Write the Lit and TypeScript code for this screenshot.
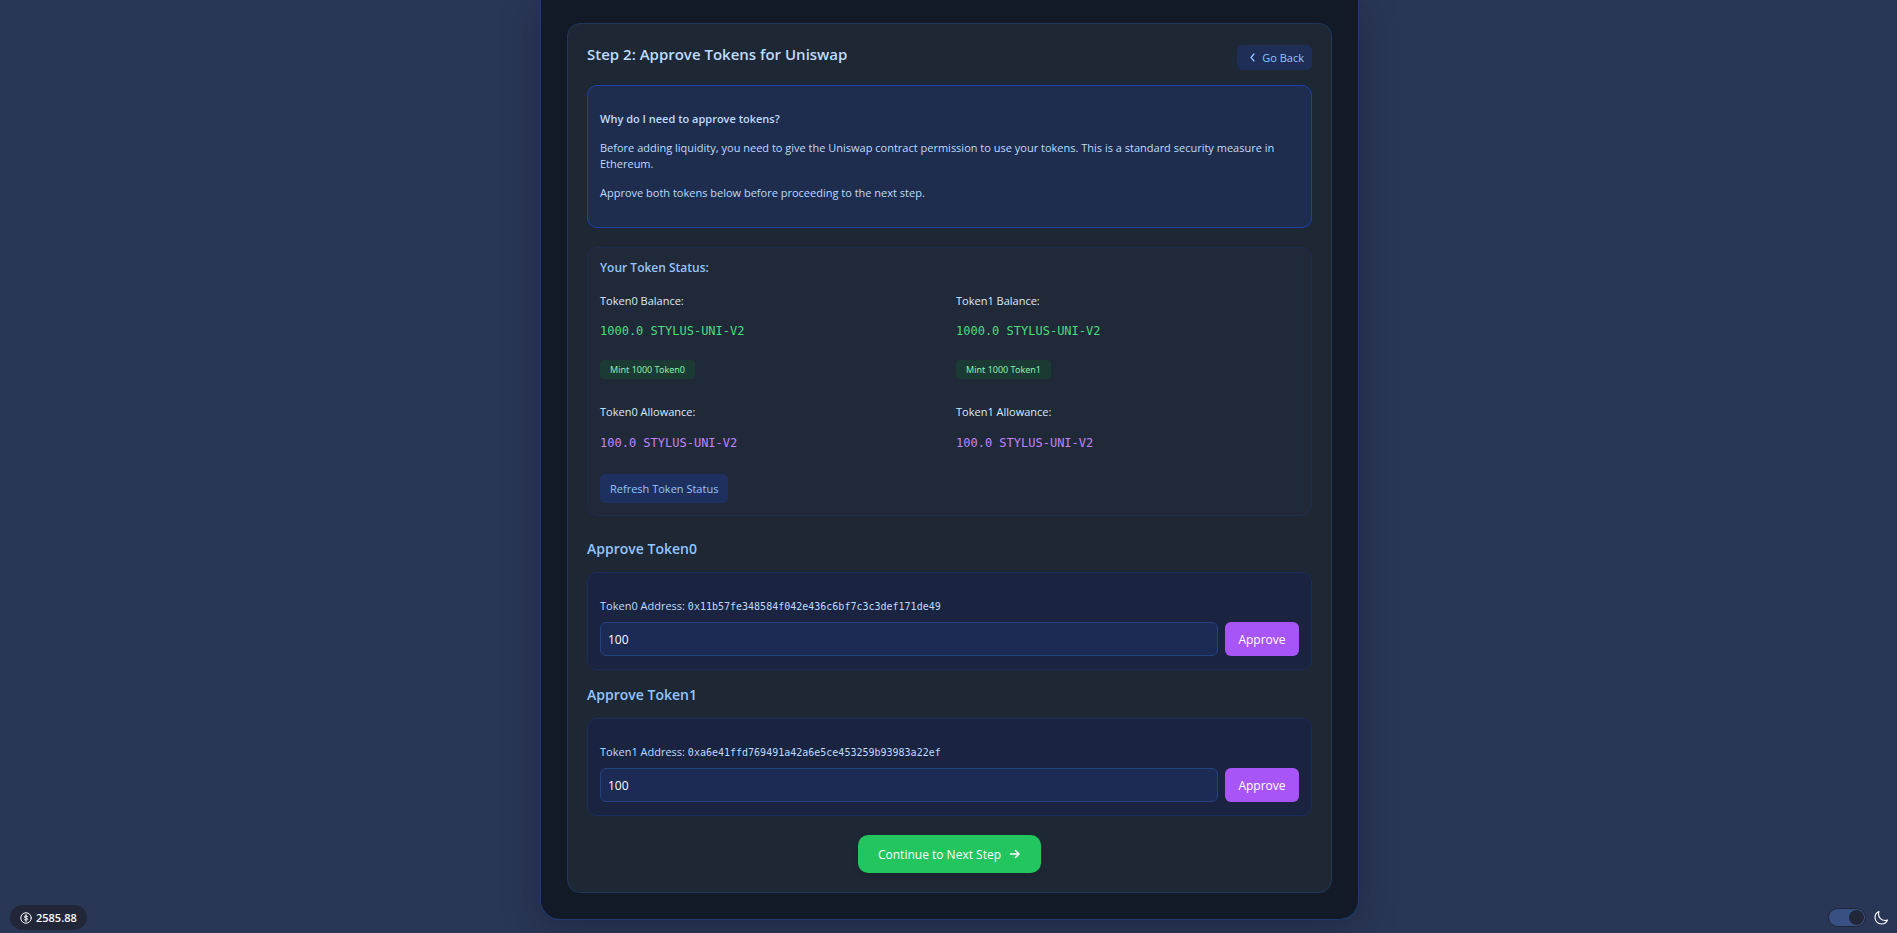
import { LitElement, html, css } from "lit";
import { customElement, property } from "lit/decorators.js";

const controls = css`
  button {
    font: inherit;
    border: 0;
    margin: 0;
    cursor: pointer;
    display: inline-flex;
    align-items: center;
    justify-content: center;
    white-space: nowrap;
  }
  p,
  h2,
  h3,
  h4 {
    margin: 0;
  }
  .mono {
    font-family: "DejaVu Sans Mono", monospace;
  }
`;

@customElement("token-status")
class TokenStatus extends LitElement {
  @property() token = "";
  @property() balance = "";
  @property() allowance = "";

  static styles = [
    controls,
    css`
      :host {
        display: block;
      }
      .label {
        font-size: 11px;
        line-height: 16px;
        color: #dbeafe;
      }
      .amount {
        margin-top: 12px;
        font-size: 12px;
        line-height: 20px;
      }
      .balance {
        color: #4ade80;
      }
      .allowance {
        color: #c084fc;
        margin-top: 13px;
      }
      .mint {
        height: 19px;
        margin: 19px 0 25px;
        padding: 0 10px;
        border-radius: 4px;
        background: #1c3a34;
        color: #86efac;
        font-family: "Noto Sans", sans-serif;
        font-size: 9px;
      }
    `,
  ];

  render() {
    return html`
      <p class="label">${this.token} Balance:</p>
      <p class="amount balance mono">${this.balance}</p>
      <button class="mint" type="button">Mint 1000 ${this.token}</button>
      <p class="label">${this.token} Allowance:</p>
      <p class="amount allowance mono">${this.allowance}</p>
    `;
  }
}

@customElement("approve-form")
class ApproveForm extends LitElement {
  @property() token = "";
  @property() address = "";

  static styles = [
    controls,
    css`
      :host {
        display: block;
      }
      .heading {
        font-size: 14px;
        line-height: 20px;
        font-weight: 600;
        color: #93c5fd;
        margin-bottom: 13px;
      }
      .box {
        padding: 25px 12px 13px;
        border: 1px solid #1c2c5c;
        border-radius: 10px;
        background: #1a2440;
      }
      .address {
        display: block;
        font-size: 11px;
        line-height: 16px;
        color: #bfdbfe;
        margin-bottom: 7px;
      }
      .address .mono {
        font-size: 10px;
      }
      .row {
        display: flex;
        gap: 7px;
      }
      .amount {
        flex: 1;
        min-width: 0;
        height: 34px;
        box-sizing: border-box;
        padding: 0 7px;
        border: 1px solid #234181;
        border-radius: 6px;
        background: #1b2b56;
        color: #fff;
        font: inherit;
        font-size: 12px;
        outline: 0;
      }
      .approve {
        min-width: 74px;
        height: 34px;
        padding: 0 12px;
        border-radius: 6px;
        background: #a855f7;
        color: #fff;
        font-size: 12px;
      }
    `,
  ];

  render() {
    return html`
      <h3 class="heading">Approve ${this.token}</h3>
      <div class="box">
        <label class="address" for="amount"
          >${this.token} Address: <span class="mono">${this.address}</span></label
        >
        <div class="row">
          <input id="amount" class="amount" type="text" value="100" />
          <button class="approve" type="button">Approve</button>
        </div>
      </div>
    `;
  }
}

@customElement("app-root")
class AppRoot extends LitElement {
  static styles = [
    controls,
    css`
      :host {
        display: block;
        box-sizing: border-box;
        min-height: 100vh;
        padding: 0 0 13px 2px;
        background: #2a3655;
        font-family: "Open Sans", "Noto Sans", sans-serif;
        overflow: hidden;
      }
      .panel {
        box-sizing: border-box;
        max-width: 819px;
        margin: 0 auto;
        padding: 23px 26px 26px;
        border: 1px solid #1e3a6e;
        border-top: 0;
        border-radius: 0 0 20px 20px;
        background: #121927;
        box-shadow: 0 8px 36px rgba(17, 24, 39, 0.4);
      }
      .card {
        padding: 19px;
        border: 1px solid #20375a;
        border-radius: 13px;
        background: #1e2734;
      }
      .header {
        display: flex;
        justify-content: space-between;
        align-items: flex-start;
        margin-bottom: 15px;
      }
      .title {
        font-size: 15px;
        line-height: 22px;
        font-weight: 600;
        color: #bfdbfe;
      }
      .back {
        height: 25px;
        margin-top: 2px;
        padding: 0 8px 0 12px;
        gap: 5px;
        border-radius: 6px;
        background: #1e2e57;
        color: #93c5fd;
        font-size: 11px;
      }
      .info {
        padding: 12px 12px 13px;
        border: 1px solid #1e40af;
        border-radius: 10px;
        background: #1e2d4e;
        color: #bfdbfe;
        font-size: 11px;
        line-height: 16px;
      }
      .info p {
        margin: 13px 0;
      }
      .info strong {
        font-weight: 600;
      }
      .status {
        margin: 19px 0 23px;
        padding: 12px;
        border: 1px solid #1e2d4e;
        border-radius: 10px;
        background: #202937;
      }
      .status-title {
        font-size: 12px;
        line-height: 16px;
        font-weight: 600;
        color: #93c5fd;
        margin-bottom: 17px;
      }
      .columns {
        display: grid;
        grid-template-columns: 1fr 1fr;
        gap: 13px;
      }
      .refresh {
        height: 29px;
        margin-top: 21px;
        padding: 0 10px;
        border-radius: 5px;
        background: #1e3060;
        color: #93c5fd;
        font-size: 11px;
      }
      .forms {
        display: grid;
        gap: 15px;
      }
      .actions {
        display: flex;
        justify-content: center;
        margin-top: 19px;
      }
      .continue {
        height: 38px;
        padding: 0 20px;
        gap: 8px;
        border-radius: 10px;
        background: #22c55e;
        color: #fff;
        font-size: 12px;
        box-shadow: 0 3px 5px rgba(0, 0, 0, 0.12);
      }
      .price {
        position: fixed;
        left: 10px;
        bottom: 3px;
        height: 25px;
        padding: 0 10px;
        gap: 4px;
        border-radius: 13px;
        background: #212638;
        color: #f9fbff;
        font-size: 11px;
        font-weight: 600;
      }
      .theme {
        position: fixed;
        right: 8px;
        bottom: 6px;
        display: flex;
        align-items: center;
        gap: 7px;
      }
      .toggle {
        appearance: none;
        box-sizing: border-box;
        width: 38px;
        height: 19px;
        margin: 0;
        padding: 1px;
        display: flex;
        justify-content: flex-end;
        border: 1px solid #212638;
        border-radius: 10px;
        background: #385183;
        cursor: pointer;
      }
      .toggle::before {
        content: "";
        width: 15px;
        height: 15px;
        border-radius: 50%;
        background: #212638;
      }
      .moon {
        display: flex;
      }
    `,
  ];

  render() {
    return html`
      <main class="panel">
        <section class="card">
          <header class="header">
            <h2 class="title">Step 2: Approve Tokens for Uniswap</h2>
            <button class="back" type="button">
              <svg width="8" height="10" viewBox="0 0 8 10" fill="none" stroke="currentColor" stroke-width="1.2" stroke-linecap="round" stroke-linejoin="round" aria-hidden="true">
                <path d="M5 1 2 4.500 5 8" />
              </svg>
              Go Back
            </button>
          </header>

          <div class="info">
            <p><strong>Why do I need to approve tokens?</strong></p>
            <p>
              Before adding liquidity, you need to give the Uniswap contract permission to use your tokens. This is a
              standard security measure in Ethereum.
            </p>
            <p>Approve both tokens below before proceeding to the next step.</p>
          </div>

          <div class="status">
            <h3 class="status-title">Your Token Status:</h3>
            <div class="columns">
              <token-status token="Token0" balance="1000.0 STYLUS-UNI-V2" allowance="100.0 STYLUS-UNI-V2"></token-status>
              <token-status token="Token1" balance="1000.0 STYLUS-UNI-V2" allowance="100.0 STYLUS-UNI-V2"></token-status>
            </div>
            <button class="refresh" type="button">Refresh Token Status</button>
          </div>

          <div class="forms">
            <approve-form token="Token0" address="0x11b57fe348584f042e436c6bf7c3c3def171de49"></approve-form>
            <approve-form token="Token1" address="0xa6e41ffd769491a42a6e5ce453259b93983a22ef"></approve-form>
          </div>

          <div class="actions">
            <button class="continue" type="button">
              Continue to Next Step
              <svg width="12" height="12" viewBox="0 0 12 12" fill="none" stroke="currentColor" stroke-width="1.5" stroke-linecap="round" stroke-linejoin="round" aria-hidden="true">
                <path d="M1.500 6h8.500M6.500 2.500 10 6 6.500 9.500" />
              </svg>
            </button>
          </div>
        </section>
      </main>

      <button class="price" type="button">
        <svg width="12" height="12" viewBox="0 0 24 24" fill="none" stroke="currentColor" stroke-width="2" stroke-linecap="round" stroke-linejoin="round" aria-hidden="true">
          <circle cx="12" cy="12" r="10.5" />
          <path d="M12 5v14M15.500 9c-1-1.800-7-2-7 .8 0 2.700 7 1.500 7 4.400 0 2.600-6 2.600-7.500.4" />
        </svg>
        <span>2585.88</span>
      </button>

      <label class="theme">
        <input class="toggle" type="checkbox" aria-label="Dark theme" checked />
        <span class="moon">
          <svg width="16" height="16" viewBox="0 0 24 24" fill="none" stroke="#f9fbff" stroke-width="1.7" stroke-linecap="round" stroke-linejoin="round" aria-hidden="true">
            <path d="M21.752 15.002A9.720 9.720 0 0 1 18 15.750c-5.385 0-9.750-4.365-9.750-9.750 0-1.330.266-2.597.748-3.752A9.753 9.753 0 0 0 3 11.250C3 16.635 7.365 21 12.750 21a9.753 9.753 0 0 0 9.002-5.998Z" />
          </svg>
        </span>
      </label>
    `;
  }
}
